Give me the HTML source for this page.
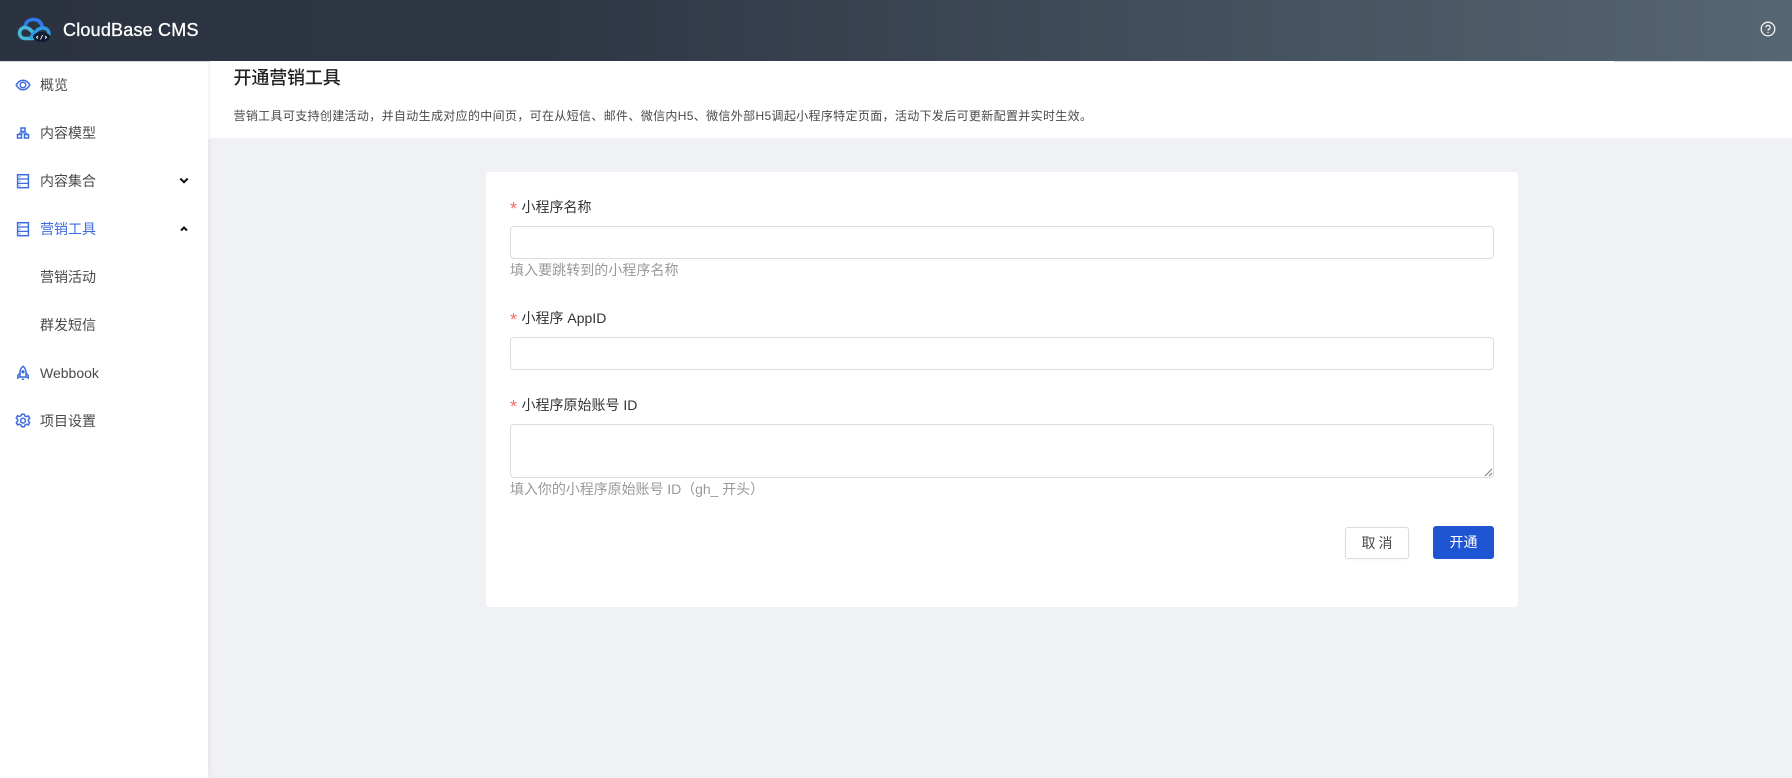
<!DOCTYPE html>
<html lang="zh-CN"><head><meta charset="utf-8"><title>CloudBase CMS</title>
<style>
*{box-sizing:border-box}
html,body{margin:0;padding:0;width:1792px;height:778px;overflow:hidden;background:#f0f1f5;font-family:"Liberation Sans","Noto Sans CJK SC",sans-serif;color:#333}
.abs,.abs>*{position:absolute}
.t{white-space:nowrap;line-height:20px;height:20px}
#hd{left:0;top:0;width:1792px;height:61px;background:linear-gradient(90deg,#2b3240 0%,#2e3644 30%,#566672 100%)}
#sb{left:0;top:61px;width:208px;height:717px;background:#fff;box-shadow:2px 0 6px rgba(0,0,0,.05)}
#ph{left:212px;top:61px;width:1580px;height:77px;background:#fff}
#ph2{left:208px;top:61px;width:4px;height:78px;background:linear-gradient(90deg,#f2f3f6,#fff)}
.m{left:40px;font-size:14px;color:#4a4a4a}
.ic{left:15px;width:16px;height:16px;fill:none;stroke:#3d6be0;stroke-width:1.5}
#card{left:486px;top:172px;width:1032px;height:435px;background:#fff;border-radius:3px}
.lb{left:521.500px;font-size:14px;color:#333}
.st{left:510px;font-size:18px;color:#f56c6c}
.in{left:510px;width:984px;background:#fff;border:1px solid #dcdcdc;border-radius:4px}
.hp{left:510px;font-size:14px;color:#999}
</style></head><body><div class="abs" style="inset:0;position:absolute">
<div id="sb"></div>
<div id="ph2"></div>
<div id="ph"></div>
<div id="hd"></div>
<div style="left:0;top:61px;width:210px;height:1px;background:#d5d8dc"></div>
<div style="left:1614px;top:61px;width:178px;height:1px;background:#d5d8dc"></div>

<svg style="left:17px;top:17px" width="34" height="26" viewBox="0 0 34 26" fill="none">
<path d="M8 10C8.500 5 12 2.500 16.500 2.500c4 0 7 2 8.500 6" stroke="#2f7cf0" stroke-width="3.600" stroke-linecap="round"/>
<path d="M16 21.500H8a5.500 5.500 0 1 1 0-11c4 0 6 3 9 6" stroke="#45b8dc" stroke-width="3.600" stroke-linecap="round"/>
<path d="M14 20c3-3 6-9 12-9 3.500 0 6 2.500 6 6" stroke="#2f9be8" stroke-width="3.400" stroke-linecap="round"/>
<ellipse cx="24.500" cy="20" rx="8.500" ry="5" fill="#101c30"/>
<path d="M21 19l-1.500 1.300 1.500 1.300M28 19l1.500 1.300-1.500 1.300M25.500 18l-2 4.500" stroke="#fff" stroke-width=".9"/>
</svg>
<div class="t" style="left:63px;top:19px;font-size:18px;color:#fff;letter-spacing:.2px;line-height:22px;height:22px;-webkit-text-stroke:.3px #fff">CloudBase CMS</div>
<svg style="left:1760px;top:21px" width="16" height="16" viewBox="0 0 16 16" fill="none" stroke="#f2f2f2" stroke-width="1.300"><circle cx="8" cy="8" r="6.800"/><path d="M6 6.400a2 2 0 1 1 3 1.700c-.7.400-1 .8-1 1.600"/><path d="M8 11v1.200"/></svg>

<svg class="ic" style="top:77px" viewBox="0 0 16 16"><path d="M1.200 8C3 4.800 5.200 3.200 8 3.200S13 4.800 14.800 8C13 11.200 10.800 12.800 8 12.800S3 11.200 1.200 8z"/><circle cx="8" cy="8" r="2.800"/></svg>
<div class="t m" style="top:75px">概览</div>
<svg class="ic" style="top:125px" viewBox="0 0 16 16"><rect x="6" y="3" width="4" height="3.500"/><rect x="2.500" y="9.500" width="4" height="3.500"/><rect x="9.500" y="9.500" width="4" height="3.500"/><path d="M4.500 9V8h7v1" stroke-width="1"/></svg>
<div class="t m" style="top:123px">内容模型</div>
<svg class="ic" style="top:173px" viewBox="0 0 16 16"><rect x="2.600" y="1.700" width="10.800" height="13"/><path d="M2.600 6h10.800M2.600 10.400h10.800M4.500 3.900h1M4.500 8.200h1M4.500 12.600h1" stroke-width="1.200"/></svg>
<div class="t m" style="top:171px">内容集合</div>
<svg style="left:179px;top:177px" width="10" height="8" viewBox="0 0 10 8" fill="none" stroke="#111" stroke-width="2"><path d="M1.300 1.500L5 5.200l3.700-3.700"/></svg>
<svg class="ic" style="top:221px" viewBox="0 0 16 16"><rect x="2.600" y="1.700" width="10.800" height="13"/><path d="M2.600 6h10.800M2.600 10.400h10.800M4.500 3.900h1M4.500 8.200h1M4.500 12.600h1" stroke-width="1.200"/></svg>
<div class="t m" style="top:219px;color:#3d6be0">营销工具</div>
<svg style="left:179px;top:225px" width="10" height="8" viewBox="0 0 10 8" fill="none" stroke="#111" stroke-width="2"><path d="M2 5.500L5 2.500l3 3"/></svg>
<div class="t m" style="top:267px">营销活动</div>
<div class="t m" style="top:315px">群发短信</div>
<svg class="ic" style="top:365px" viewBox="0 0 16 16"><path d="M8 1.300C6 2.800 5 5 5 7.500V12h6V7.500C11 5 10 2.800 8 1.300z"/><path d="M5 8L2.800 10.500V13L5 12M11 8l2.200 2.500V13L11 12M6.800 14.300h2.400"/><circle cx="8" cy="6.800" r=".9"/></svg>
<div class="t m" style="top:363px">Webbook</div>
<svg class="ic" style="top:413px" viewBox="0 0 16 16"><path d="M6.700 1.300h2.600l.6 1.700 1.800.6 1.700-.7 1.300 2.300-1.300 1.300v1.800l1.300 1.300-1.300 2.300-1.700-.7-1.800.9-.6 1.700H6.700l-.6-1.700-1.800-.9-1.700.7-1.300-2.300 1.300-1.300V6.300L1.300 5l1.300-2.300 1.700.7 1.800-.6z"/><circle cx="8" cy="7.600" r="2.400"/></svg>
<div class="t m" style="top:411px">项目设置</div>

<div class="t" style="left:233.500px;top:67px;font-size:18px;font-weight:500;color:#222;line-height:22px;height:22px;letter-spacing:-.15px">开通营销工具</div>
<div class="t" style="left:233.500px;top:106px;font-size:12px;color:#4a4a4a;letter-spacing:.34px">营销工具可支持创建活动，并自动生成对应的中间页，可在从短信、邮件、微信内H5、微信外部H5调起小程序特定页面，活动下发后可更新配置并实时生效。</div>

<div id="card"></div>
<div class="t st" style="top:199px">*</div>
<div class="t lb" style="top:197px">小程序名称</div>
<div class="in" style="top:226px;height:32.500px"></div>
<div class="t hp" style="top:260px;letter-spacing:.05px">填入要跳转到的小程序名称</div>
<div class="t st" style="top:310px">*</div>
<div class="t lb" style="top:308px">小程序 AppID</div>
<div class="in" style="top:337px;height:32.500px"></div>
<div class="t st" style="top:397px">*</div>
<div class="t lb" style="top:395px">小程序原始账号 ID</div>
<div class="in" style="top:424px;height:54px"></div>
<svg style="left:1484px;top:468px" width="9" height="9" viewBox="0 0 9 9" stroke="#777" stroke-width=".9"><path d="M1 8L8 1M5 8l3-3"/></svg>
<div class="t hp" style="top:479px;letter-spacing:-.05px">填入你的小程序原始账号 ID（gh_ 开头）</div>

<div class="t" style="left:1345px;top:526.500px;width:64px;height:32.500px;line-height:31px;border:1px solid #dcdcdc;border-radius:3px;background:#fff;text-align:center;font-size:14px;color:#4a4a4a;letter-spacing:3px;text-indent:3px;box-shadow:0 1px 2px rgba(0,0,0,.04)">取消</div>
<div class="t" style="left:1433px;top:526px;width:61px;height:33px;line-height:33px;border-radius:3px;background:#1e55d3;text-align:center;font-size:14px;color:#fff">开通</div>
</div></body></html>
